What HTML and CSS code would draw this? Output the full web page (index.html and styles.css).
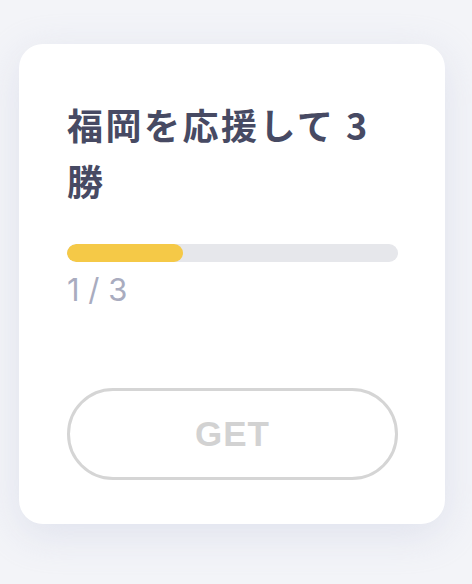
FILE: index.html
```html
<!doctype html>
<html lang="ja">
<head>
<title>Mission</title>
<link rel="stylesheet" href="styles.css">
</head>
<body>
<div class="mission-card">
	<h1 class="mission-title">福岡を応援して 3勝</h1>
	<div class="progress-track">
		<div class="progress-fill" style="width: 35%"></div>
	</div>
	<div class="progress-count">1 / 3</div>
	<button class="get-button" disabled>GET</button>
</div>
</body>
</html>
```

FILE: styles.css
```css
html, body {
	height: 100%;
	margin: 0;
	background: #f3f4f8;
	font-family: "Noto Sans CJK JP", "Noto Sans", sans-serif;
}
body {
	padding: 44px 27px 0 19px;
	box-sizing: border-box;
}
.mission-card {
	background: #fff;
	border-radius: 24px;
	padding: 52px 47px 44px 48px;
	box-shadow: 0 10px 40px rgba(200, 205, 225, 0.45);
	display: flex;
	flex-direction: column;
}
.mission-title {
	margin: 0;
	font-size: 36px;
	line-height: 56px;
	font-weight: 700;
	letter-spacing: 2.5px;
	color: #474a63;
}
.progress-track {
	margin-top: 36px;
	height: 18px;
	border-radius: 9px;
	background: #e6e7eb;
	overflow: hidden;
}
.progress-fill {
	height: 100%;
	border-radius: 9px;
	background: #f5c947;
}
.progress-count {
	margin-top: 10px;
	font-family: Inter, "Noto Sans", sans-serif;
	font-size: 31px;
	line-height: 36px;
	color: #a9acbf;
}
.get-button {
	margin-top: 80px;
	height: 92px;
	border: 3px solid #d5d5d5;
	border-radius: 46px;
	background: #fff;
	font-family: "Liberation Sans", Arial, sans-serif;
	font-size: 35px;
	font-weight: 700;
	letter-spacing: 1px;
	color: #d2d2d2;
}
```
